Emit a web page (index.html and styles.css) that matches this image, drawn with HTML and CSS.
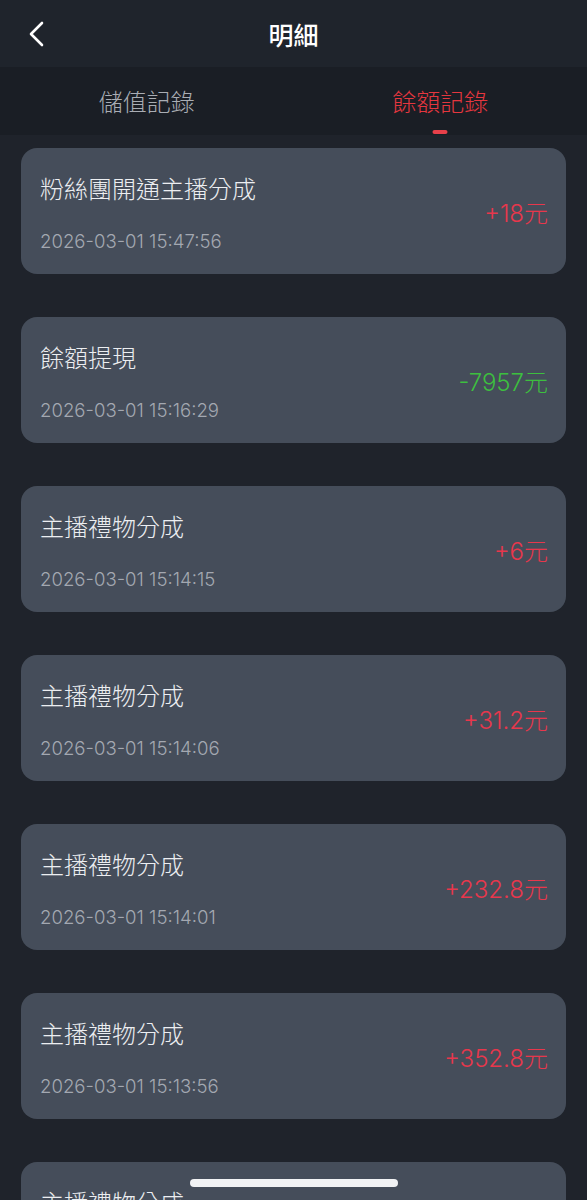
FILE: index.html
```html
<!DOCTYPE html>
<html lang="zh-Hant">
<head>
  <meta charset="UTF-8" />
  <meta name="viewport" content="width=device-width, initial-scale=1.0" />
  <title>明細</title>
  <link rel="stylesheet" href="styles.css">
</head>
<body>
  <header class="topBar">
    <span class="backBtn">
      <svg width="18" height="26" viewBox="0 0 18 26">
        <path d="M15 2 L4 13 L15 24" fill="none" stroke="#fff" stroke-width="2.6" stroke-linecap="round" stroke-linejoin="round"/>
      </svg>
    </span>
    <h1 class="title">明細</h1>
  </header>

  <nav class="tabs">
    <div class="tab">儲值記錄</div>
    <div class="tab active">餘額記錄</div>
  </nav>

  <main class="list">
    <div class="card">
      <div class="info">
        <div class="name">粉絲團開通主播分成</div>
        <div class="time">2026-03-01 15:47:56</div>
      </div>
      <div class="amount plus">+18元</div>
    </div>
    <div class="card">
      <div class="info">
        <div class="name">餘額提現</div>
        <div class="time">2026-03-01 15:16:29</div>
      </div>
      <div class="amount minus">-7957元</div>
    </div>
    <div class="card">
      <div class="info">
        <div class="name">主播禮物分成</div>
        <div class="time">2026-03-01 15:14:15</div>
      </div>
      <div class="amount plus">+6元</div>
    </div>
    <div class="card">
      <div class="info">
        <div class="name">主播禮物分成</div>
        <div class="time">2026-03-01 15:14:06</div>
      </div>
      <div class="amount plus">+31.2元</div>
    </div>
    <div class="card">
      <div class="info">
        <div class="name">主播禮物分成</div>
        <div class="time">2026-03-01 15:14:01</div>
      </div>
      <div class="amount plus">+232.8元</div>
    </div>
    <div class="card">
      <div class="info">
        <div class="name">主播禮物分成</div>
        <div class="time">2026-03-01 15:13:56</div>
      </div>
      <div class="amount plus">+352.8元</div>
    </div>
    <div class="card">
      <div class="info">
        <div class="name">主播禮物分成</div>
      </div>
    </div>
  </main>

  <div class="homeBar"></div>
</body>
</html>
```

FILE: styles.css
```css
html, body {
  margin: 0;
  padding: 0;
  background: #1f232b;
  height: 1200px;
  overflow: hidden;
  font-family: Inter, "Noto Sans CJK TC", sans-serif;
  color: #fff;
}

.topBar {
  height: 67px;
  background: #1f242c;
  display: flex;
  align-items: center;
  justify-content: center;
  position: relative;
}

.backBtn {
  position: absolute;
  left: 27px;
  top: 21px;
  display: flex;
}

.title {
  margin: 0;
  font-size: 25px;
  font-weight: 500;
  font-family: "Noto Sans CJK TC", sans-serif;
}

.tabs {
  height: 68px;
  background: #1a1e25;
  display: flex;
}

.tab {
  flex: 1;
  display: flex;
  align-items: center;
  justify-content: center;
  font-family: "Noto Sans CJK TC", sans-serif;
  font-weight: 300;
  font-size: 24px;
  color: #a9adb4;
  position: relative;
  padding-bottom: 2px;
}

.tab.active {
  color: #e5373f;
}

.tab.active::after {
  content: "";
  position: absolute;
  bottom: 1px;
  left: 50%;
  transform: translateX(-50%);
  width: 15px;
  height: 4px;
  border-radius: 2px;
  background: #e8404a;
}

.list {
  display: flex;
  flex-direction: column;
  gap: 43px;
  padding: 13px 21px 0 21px;
}

.card {
  background: #454d5a;
  border-radius: 16px;
  height: 126px;
  box-sizing: border-box;
  padding: 28px 18px 23px 19px;
  display: flex;
  align-items: center;
  justify-content: space-between;
  flex-shrink: 0;
}

.info {
  display: flex;
  flex-direction: column;
  align-self: stretch;
}

.name {
  font-family: "Noto Sans CJK TC", sans-serif;
  font-weight: 300;
  font-size: 24px;
  line-height: 24px;
  color: #eceef1;
}

.time {
  margin-top: 31px;
  font-size: 18.6px;
  font-weight: 300;
  line-height: 20px;
  color: #a3a8b1;
}

.amount {
  font-size: 24px;
  font-weight: 300;
  margin-top: -4px;
}

.amount.plus {
  color: #e8374c;
}

.amount.minus {
  color: #3dbf3f;
}

.homeBar {
  position: fixed;
  left: 190px;
  bottom: 13px;
  width: 208px;
  height: 8px;
  border-radius: 4px;
  background: #f1f2f4;
}
```
